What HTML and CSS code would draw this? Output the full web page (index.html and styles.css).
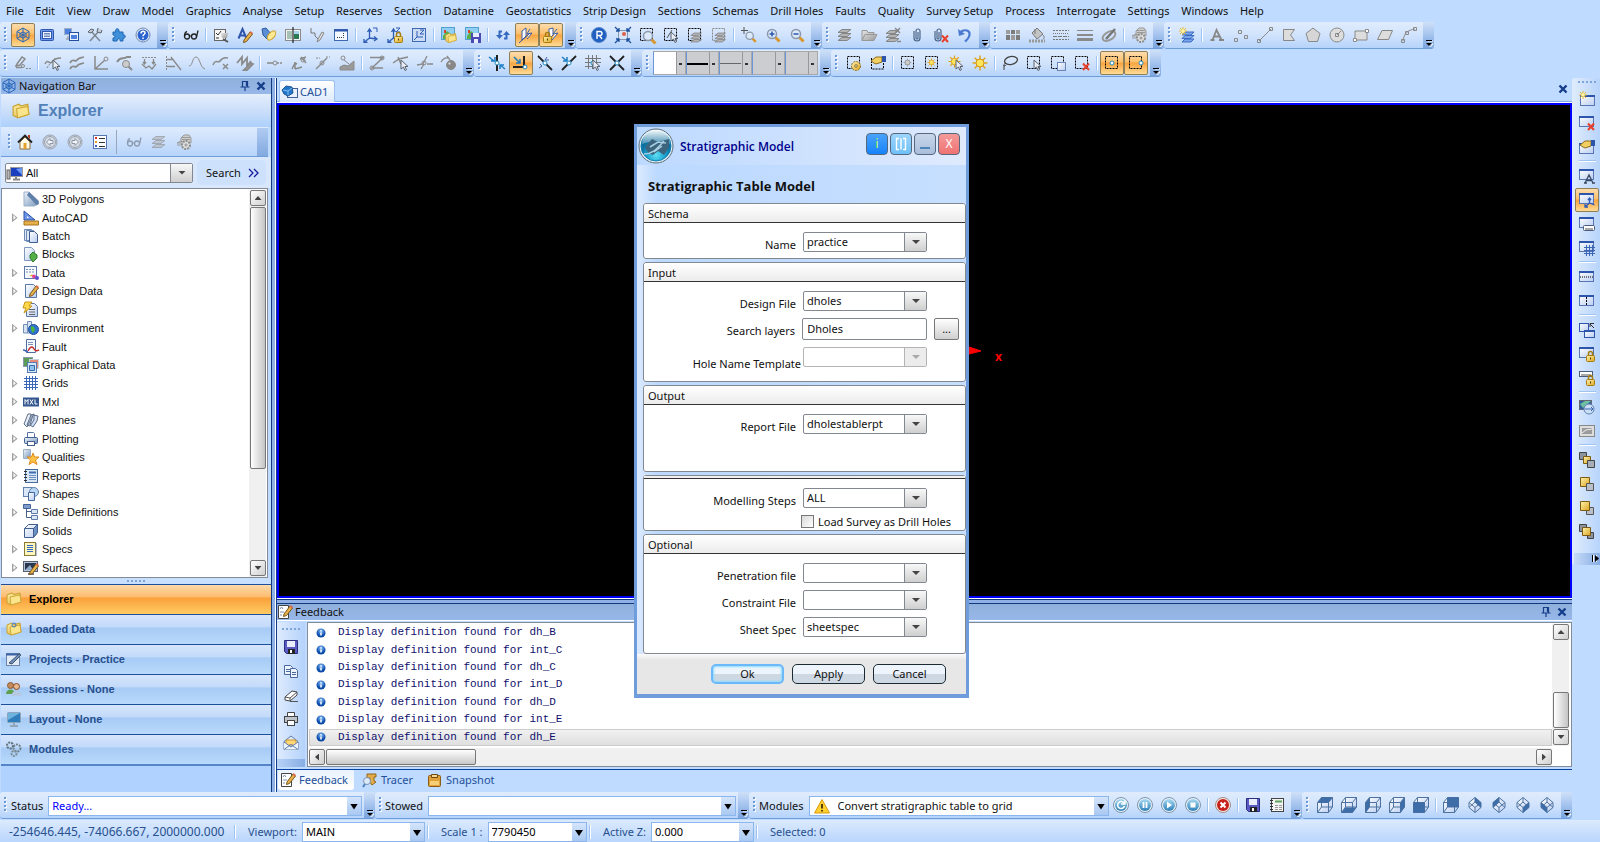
FILE: index.html
```html
<!DOCTYPE html>
<html lang="en">
<head>
<meta charset="utf-8">
<title>CAD1 - Stratigraphic Model</title>
<link rel="stylesheet" href="styles.css">
</head>
<body>
<svg class="defs" aria-hidden="true">
  <defs>
    <linearGradient id="gold" x2="1" y2="1"><stop stop-color="#fff3b0"/><stop offset="1" stop-color="#dba520"/></linearGradient>
    <linearGradient id="pane" x2="1" y2="1"><stop stop-color="#fff"/><stop offset="1" stop-color="#b9cdf2"/></linearGradient>
    <linearGradient id="steel" x2="1" y2="1"><stop stop-color="#eef5fb"/><stop offset="1" stop-color="#7795bb"/></linearGradient>
    <linearGradient id="ash" x2="1" y2="1"><stop stop-color="#e4e4e4"/><stop offset="1" stop-color="#9a9a9a"/></linearGradient>
    <linearGradient id="sky" x2="0" y2="1"><stop stop-color="#a9dbf3"/><stop offset="1" stop-color="#2d7fb8"/></linearGradient>
    <radialGradient id="ball" cy=".3"><stop stop-color="#8cc4ff"/><stop offset="1" stop-color="#0a4aa8"/></radialGradient>
    <radialGradient id="lagoon" cy=".8"><stop stop-color="#5fe0f5"/><stop offset=".6" stop-color="#1aa3cf"/><stop offset="1" stop-color="#0c6f9f"/></radialGradient>
    <linearGradient id="gloss" x2="0" y2="1"><stop stop-color="#fff" stop-opacity=".95"/><stop offset="1" stop-color="#fff" stop-opacity=".25"/></linearGradient>
  </defs>
  <symbol id="more" viewBox="0 0 11 26"><path d="M4 18h5M4 21h5l-2.500 3z" stroke="#fff" transform="translate(1 1)"/><path d="M3 18.500h6" stroke="#000"/><path d="M3 21h6l-3 3z" fill="#000"/></symbol>
  <symbol id="dash" viewBox="0 0 16 16"><rect x="1.500" y="1.500" width="12" height="12" stroke="#000" stroke-dasharray="2 1"/></symbol>
  <symbol id="lock" viewBox="0 0 16 16"><path d="M9.500 10V7.500a2 2 0 0 1 4 0V10" stroke="#a87d10" stroke-width="1.500"/><rect x="7.500" y="9.500" width="8" height="6" rx="1" fill="url(#gold)" stroke="#a87d10"/><path d="M11.500 11.500v2" stroke="#5a3c00"/></symbol>
  <symbol id="win" viewBox="0 0 16 16"><rect x=".5" y="1.500" width="14" height="10" fill="url(#pane)" stroke="#5676b4"/><path d="M0 2h15" stroke="#2c55ab" stroke-width="2"/></symbol>
  <symbol id="stack" viewBox="0 0 16 16"><g fill="#b5b5b5" stroke="#858585"><path d="M1 13.500h9l4-3H5zM1 9.500h9l4-3H5zM1 5.500h9l4-3H5z"/></g></symbol>
  <symbol id="mag" viewBox="0 0 16 16"><path d="M10.500 10.500l4 4" stroke="#d9962a" stroke-width="3"/><circle cx="7" cy="7" r="4.500" fill="#dbe9fb" stroke="#8b97a8" stroke-width="1.500"/></symbol>
  <symbol id="folder" viewBox="0 0 16 16"><path d="M1 4l5-2 2 1.500 6-1.500 1 9-10 3-4-2z" fill="url(#gold)" stroke="#c79f2a"/><path d="M4 6l10-2 1 7-10 3z" fill="#fbe58c" stroke="#d0a93a"/></symbol>
  <symbol id="save" viewBox="0 0 16 16"><path d="M1.500 1.500h13v13h-11l-2-2z" fill="#5a5ac4" stroke="#2c2c80"/><path d="M4 2h8v6H4z" fill="#e9edfb"/><path d="M5 10h7v5H5z" fill="#222"/><path d="M7 11h2v3H7z" fill="#fff"/></symbol>
  <symbol id="pencil" viewBox="0 0 16 16"><path d="M7 12l6-8 2.500 2-6 7.500-3 1z" fill="#e7b24b" stroke="#77551d"/><path d="M12.500 4.500l2.500 2 1-1.500-2.500-2z" fill="#d96a4c"/></symbol>
  <symbol id="arrow" viewBox="0 0 16 16"><path d="M8 5v9l2.500-2 1.500 3.500 1.500-.8-1.500-3.200h3z" fill="#e8edf5" stroke="#59626f"/></symbol>
  <symbol id="sun" viewBox="0 0 16 16"><path d="M8 .5v15M.5 8h15M2.700 2.700l10.600 10.600M13.300 2.700L2.700 13.300" stroke="#e0a41c" stroke-width="1.500"/><circle cx="8" cy="8" r="4" fill="#ffe55c" stroke="#d4931a"/></symbol>
  <symbol id="spark" viewBox="0 0 16 16"><path d="M4 0v8M0 4h8M1 1l6 6M7 1L1 7" stroke="#e9bb2d"/><circle cx="4" cy="4" r="1.800" fill="#fff4a0"/></symbol>
  <symbol id="cross" viewBox="0 0 16 16"><path d="M9 8.500l6 6.500M15 8.500L9 15" stroke="#e8402a" stroke-width="2"/></symbol>
  <symbol id="hand" viewBox="0 0 16 16"><path d="M1 6l5-4h6v5l-6 2-2-1z" fill="#f2cf63" stroke="#8c6a1b"/><path d="M12 1h4v6h-4z" fill="#2c55ab"/></symbol>
  <symbol id="doc" viewBox="0 0 16 16"><path d="M2.500 1.500h8l3 3v10h-11z" fill="url(#pane)" stroke="#5a79a8"/></symbol>
  <symbol id="globe" viewBox="0 0 16 16"><circle cx="8" cy="8" r="7" fill="#d7dde6" stroke="#97a0ad"/><circle cx="8" cy="8" r="5.500" fill="none" stroke="#97a0ad"/></symbol>
  <symbol id="palm" viewBox="0 0 16 16"><path d="M5 8V4l3-3h5l2 3v5M1 9l4-2 3 2" fill="#cfcfcf" stroke="#999"/><path d="M6 3.500h8M6 5.500h8M1 9h5M1 11h5" stroke="#999"/><circle cx="10" cy="11" r="4" fill="#ddd" stroke="#8d8d8d" stroke-width="2" stroke-dasharray="2 1"/><circle cx="10" cy="11" r="1" fill="#fff" stroke="#888"/></symbol>
  <symbol id="glasses" viewBox="0 0 16 16"><path d="M4 4.500C2 5 1.500 7 1.500 9.500M15 3.500L13.500 10" stroke="currentColor" stroke-width="1.300"/><circle cx="4" cy="9.500" r="2.500" stroke="currentColor" stroke-width="1.300"/><circle cx="11" cy="9.500" r="2.500" stroke="currentColor" stroke-width="1.300"/><path d="M6.500 9h2" stroke="currentColor"/></symbol>
  <symbol id="axes" viewBox="0 0 16 16"><path d="M6.500 11V3M6.500 11l7 1M6.500 11l-5 4M4.500 5l2-3 2 3M11 9.500l3 2.500-3 2M1 12v3.500h3.500" stroke="#2d5bb5" stroke-width="1.300"/></symbol>
  <symbol id="node" viewBox="0 0 16 16"><circle cx="8" cy="8" r="2" fill="#fff" stroke="#1d8cc4"/></symbol>
  <symbol id="pin" viewBox="0 0 12 12"><path d="M3.500 1v5.500M8.500 1v5.500M3 1.500h6M1.500 7h9M6 7v4M7.500 2v4" stroke="#153d8a" stroke-width="1.200"/></symbol>
  <symbol id="close" viewBox="0 0 12 12"><path d="M2.500 2.500l7 7M9.500 2.500l-7 7" stroke="#153d8a" stroke-width="2.400"/></symbol>
  <symbol id="wheel" viewBox="0 0 16 16"><path d="M8 1v14M2 4.500l12 7M14 4.500l-12 7M8 1L2 4.500v7L8 15l6-3.500v-7zM8 5L5 6.500v3L8 11l3-1.500v-3z" stroke="#2567bd"/></symbol>
  <symbol id="info" viewBox="0 0 10 10"><circle cx="5" cy="5" r="4.500" fill="url(#ball)"/><path d="M5 4.500v3M5 2.200v1.200" stroke="#fff" stroke-width="1.500"/></symbol>
  <symbol id="note" viewBox="0 0 16 16"><path d="M1.500 1.500h10v13h-10z" fill="#fff" stroke="#444"/><path d="M3 5l1.500-2L6 5M3 8h4M3 11h2" stroke="#7a8fb0"/><use href="#pencil" y="-2"/></symbol>
  <symbol id="iris" viewBox="0 0 16 16"><circle cx="8" cy="8" r="7.500" fill="#e9f1f9" stroke="#7d94ad"/><circle cx="8" cy="8" r="6" fill="url(#sky)"/></symbol>
  <symbol id="box" viewBox="0 0 16 16"><path d="M.5 5.500l4-5h11v9l-4 6H.5z" fill="url(#pane)"/><path d="M.5 5.500h11v10H.5zM.5 5.500l4-5h11l-4 5M15.500.5v9.500l-4 5.500M4.500.5V10M4.500 10h11M4.500 10l-4 5.500" stroke="#4d729f"/></symbol>
  <symbol id="gem" viewBox="0 0 16 16"><path d="M8 .5l6 5v5l-6 5-6-5v-5z" fill="url(#pane)"/><path d="M8 .5l6 5v5l-6 5-6-5v-5zM2 5.500l6 5 6-5M8 10.500v5M8 .5V5L2 10.500M8 5l6 5.500" stroke="#4d729f"/></symbol>
</svg>

<nav class="menubar" aria-label="Main menu">
  <button>File</button><button>Edit</button><button>View</button><button>Draw</button><button>Model</button><button>Graphics</button><button>Analyse</button><button>Setup</button><button>Reserves</button><button>Section</button><button>Datamine</button><button>Geostatistics</button><button>Strip Design</button><button>Sections</button><button>Schemas</button><button>Drill Holes</button><button>Faults</button><button>Quality</button><button>Survey Setup</button><button>Process</button><button>Interrogate</button><button>Settings</button><button>Windows</button><button>Help</button>
</nav>

<div class="toolrow">
  <div class="toolbar" role="toolbar" aria-label="Panels"><i class="grip"></i>
    <button class="tool on" aria-label="Navigation"><svg><use href="#wheel"/></svg></button>
    <button class="tool" aria-label="Feedback panel"><svg><rect x="1.500" y="2.500" width="13" height="11" rx="1" fill="#6d9af0" stroke="#2f56a8"/><rect x="3.500" y="4.500" width="9" height="7" fill="#f2f7ff" stroke="#2f56a8"/><path d="M5 6.500h6M5 8h6M5 9.500h6" stroke="#6c86bd"/></svg></button>
    <button class="tool" aria-label="Cascade windows"><svg><rect x="1.500" y="1.500" width="7" height="6" fill="#4b7fe0" stroke="#9db0cc"/><path d="M5 9v2.500M3 12h4" stroke="#888"/><rect x="6.500" y="5.500" width="9" height="8" fill="#eaf2ff" stroke="#244f9f"/><rect x="8" y="8" width="6" height="4" fill="#4b7fe0"/></svg></button>
    <button class="tool" aria-label="Tools"><svg><path d="M3 14L12 4M4 4l9 10" stroke="#7e8693" stroke-width="1.500"/><path d="M1 5l3-3 3 1-3 3zM11 1l-1 4 4 1 1-3" fill="#c4ccd6" stroke="#5d6672"/></svg></button>
    <button class="tool" aria-label="Add-ins"><svg><path d="M2 5h3c-2-3 3-5 3-1v1h4v3c3-1 3 4 0 3v3H9c1-3-3-3-3 0H2v-3c3 0 2-3 0-3z" fill="#3f8fdb" stroke="#1f67b4"/></svg></button>
    <button class="tool" aria-label="Help"><svg><circle cx="8" cy="8" r="7" fill="#e6eef9" stroke="#7188ac"/><circle cx="8" cy="8" r="5.500" fill="#2a62cf"/><path d="M6 6.500c0-3 4-3 4-.5 0 1.500-2 1.500-2 3.200M8 10.500v1.500" stroke="#fff" stroke-width="1.500"/></svg></button>
    <button class="more" aria-label="More"><svg><use href="#more"/></svg></button></div>
  <div class="toolbar" role="toolbar" aria-label="View"><i class="grip"></i>
    <button class="tool" aria-label="View mode"><svg class="dark"><use href="#glasses"/></svg></button><i class="sep"></i>
    <button class="tool" aria-label="Checklist"><svg><rect x="1.500" y="2.500" width="11" height="11" fill="#f5f5f5" stroke="#666"/><path d="M3 6l2 2 3-4M3 11h3" stroke="#333"/><path d="M8 6h7l-1 5H9z" fill="url(#ash)"/><path d="M10 12l5 3" stroke="#555" stroke-width="2"/></svg></button>
    <button class="tool" aria-label="Text style"><svg><path d="M1.500 11.500L5.500 2l4 9.500M3 8.500h5" stroke="#2c55ab" stroke-width="2"/><use href="#pencil" y="1"/></svg></button>
    <button class="tool" aria-label="Light"><svg><path d="M1 2l4-1 5 6-4 5-4-4z" fill="#5a8fd6" stroke="#2e5a9b"/><ellipse cx="10.500" cy="8.500" rx="5.500" ry="3" transform="rotate(-50 10.500 8.500)" fill="#ffe891" stroke="#caa02d"/></svg></button>
    <button class="tool" aria-label="Image"><svg><rect x=".5" y="2.500" width="15" height="11" fill="#f4f4f4" stroke="#8b8b8b"/><path d="M2 4h5v8H2z" fill="#a5c2b5"/><path d="M9 4h5v8H9z" fill="#2b7a56"/><path d="M9 4h5v3H9z" fill="#a7d3f0"/><path d="M8 0v16" stroke="#000"/></svg></button>
    <button class="tool" aria-label="Sketch"><svg><path d="M2 1v5h4M6 6v3l3 3" stroke="#777"/><path d="M9 12l4-7 2 1-4 7-3 2z" fill="#ddd" stroke="#888"/></svg></button>
    <button class="tool" aria-label="Fit window"><svg><rect x="1.500" y="2.500" width="13" height="11" fill="#f2f6fd" stroke="#3e68b2"/><path d="M1 3.500h14" stroke="#2c55ab" stroke-width="2"/><path d="M10.500 6v4.500H4" stroke="#333" stroke-dasharray="1 1"/></svg></button><i class="sep"></i>
    <button class="tool" aria-label="Rotate axes"><svg><use href="#axes"/><path d="M10 1h4v4" stroke="#2d5bb5"/></svg></button>
    <button class="tool" aria-label="Lock axes"><svg><use href="#axes"/><path d="M9 1h4l-4 4h4" stroke="#2d5bb5"/><use href="#lock"/></svg></button>
    <button class="tool" aria-label="Plane"><svg><rect x="1.500" y="1.500" width="13" height="13" fill="#cddcf5" stroke="#3e68b2"/><path d="M6 10V4M6 10h6M6 10l-3 3M9 3h4L9 7h4" stroke="#2d5bb5"/></svg></button><i class="sep"></i>
    <button class="tool" aria-label="Open picture"><svg><rect x=".5" y=".5" width="13" height="12" fill="#8fd0f2" stroke="#55a0d0"/><path d="M2 9l4-5 5 4v4H2z" fill="#5cae45"/><path d="M3 3h2v3H3z" fill="#d8452c"/><use href="#folder" x="4" y="5" width="12" height="12"/></svg></button>
    <button class="tool" aria-label="Save picture"><svg><rect x=".5" y=".5" width="13" height="12" fill="#8fd0f2" stroke="#55a0d0"/><path d="M2 9l4-5 5 4v4H2z" fill="#5cae45"/><path d="M3 3h2v3H3z" fill="#d8452c"/><path d="M6 6h10v10H6z" fill="#4a4ab4"/><path d="M8 6h6v4H8zM9 12h4v4H9z" fill="#e9edfb"/></svg></button><i class="sep"></i>
    <button class="tool" aria-label="Refresh"><svg><path d="M7 4.500H4.500V10M9 11.500h2.500V6" stroke="#3568c0" stroke-width="2"/><path d="M1 8h7l-3.500 4zM8 8h7l-3.500-4z" fill="#3568c0"/></svg></button>
    <button class="tool on" aria-label="Slice"><svg><path d="M3 4l4-3v8l-4 4zM11 2l-3 5 5-1-5 6" fill="#fff" stroke="#3a5fa5"/><path d="M0 16L11 6" stroke="#2d4f9e"/></svg></button>
    <button class="tool on" aria-label="Lock slice"><svg><path d="M6 2l4-1v7l-4 4zM14 2l-4 5 5-1-6 7" fill="#fff" stroke="#3a5fa5"/><use href="#lock" x="-7"/></svg></button>
    <button class="more" aria-label="More"><svg><use href="#more"/></svg></button></div>
  <div class="toolbar" role="toolbar" aria-label="Zoom"><i class="grip"></i>
    <button class="tool" aria-label="Reset view"><svg><circle cx="8" cy="8" r="7.500" fill="#1f5fc0" stroke="#5b88cb"/><path d="M6 12V4.500h3a2 2 0 0 1 0 4H6M8.500 8.500l2.500 3.500" stroke="#fff" stroke-width="1.400"/></svg></button>
    <button class="tool" aria-label="Zoom all"><svg><rect x="3.500" y="3.500" width="9" height="9" fill="#d9e6fa" stroke="#8296b5"/><circle cx="9" cy="7" r="2" fill="#dd6147"/><path d="M0 0l4 4M16 0l-4 4M0 16l4-4M16 16l-4-4M1 4h3V1M12 1v3h3M1 12h3v3M15 12h-3v3" stroke="#1d4f9f" stroke-width="1.300"/></svg></button>
    <button class="tool" aria-label="Zoom window"><svg><use href="#dash"/><use href="#mag" x="2" y="2"/></svg></button>
    <button class="tool" aria-label="Select line"><svg><use href="#dash"/><path d="M4 11l5-8" stroke="#555"/><use href="#arrow"/></svg></button>
    <button class="tool" aria-label="Select layer"><svg><use href="#dash"/><use href="#stack" x="3" y="4" width="13" height="13"/></svg></button>
    <button class="tool" aria-label="Unselect layer"><svg><rect x="1.500" y="1.500" width="12" height="12" stroke="#888" stroke-dasharray="2 1"/><use href="#stack" x="3" y="4" width="13" height="13"/></svg></button><i class="sep"></i>
    <button class="tool" aria-label="Pan"><svg><path d="M3 0v7M0 3.500h7" stroke="#555"/><use href="#mag" x="3" y="3" width="13" height="13"/></svg></button>
    <button class="tool" aria-label="Zoom in"><svg><use href="#mag"/><path d="M7 4.500v5M4.500 7h5" stroke="#2c55ab" stroke-width="1.500"/></svg></button>
    <button class="tool" aria-label="Zoom out"><svg><use href="#mag"/><path d="M4.500 7h5" stroke="#2c55ab" stroke-width="1.500"/></svg></button>
    <button class="more" aria-label="More"><svg><use href="#more"/></svg></button></div>
  <div class="toolbar" role="toolbar" aria-label="Layers"><i class="grip"></i>
    <button class="tool" aria-label="Layers"><svg><use href="#stack"/></svg></button>
    <button class="tool" aria-label="Open layer"><svg><path d="M1 13.500v-10h5l1 2h6v2M1 13.500l3-6h12l-3 6z" fill="url(#ash)" stroke="#999"/></svg></button>
    <button class="tool" aria-label="Remove layer"><svg><use href="#stack" y="1"/><path d="M10 1l5 5M15 1l-5 5M12 14.500h4" stroke="#888" stroke-width="1.500"/></svg></button>
    <button class="tool" aria-label="Attach"><svg><path d="M5 4v7a3 3 0 0 0 6 0V4a2 2 0 0 0-4 0v7a1 1 0 0 0 2 0V5" stroke="#4a6488" stroke-width="1.200"/></svg></button>
    <button class="tool" aria-label="Detach"><svg><path d="M2 4v7a3 3 0 0 0 6 0V4a2 2 0 0 0-4 0v7a1 1 0 0 0 2 0V5" stroke="#4a6488" stroke-width="1.200"/><use href="#cross"/></svg></button>
    <button class="tool" aria-label="Undo"><svg><path d="M4 4.500c6-3 10 0 8 5-1 3-3 4-4 5" stroke="#4a7ad0" stroke-width="2.200"/><path d="M1 2l1 7 6-2z" fill="#4a7ad0"/></svg></button>
    <button class="more" aria-label="More"><svg><use href="#more"/></svg></button></div>
  <div class="toolbar" role="toolbar" aria-label="Attributes"><i class="grip"></i>
    <button class="tool" aria-label="Colours"><svg><path d="M1 3h4v4H1zM6 8h4v5H6zM11 3h4v4h-4z" fill="#9c9c9c"/><path d="M6 3h4v4H6zM1 8h4v5H1zM11 8h4v5h-4z" fill="#7c7c7c"/></svg></button>
    <button class="tool" aria-label="Fill"><svg><path d="M3 6l5-5 6 6-6 5z" fill="#c4c4c4" stroke="#777"/><path d="M6 7V2M14 8c2 2 1 4 0 4" stroke="#777"/><path d="M0 14h16" stroke="#999" stroke-width="3" stroke-dasharray="2 1"/></svg></button>
    <button class="tool" aria-label="Line type"><svg><path d="M0 3.500h16M0 12.500h16" stroke="#777" stroke-dasharray="2 1"/><path d="M0 6.500h16" stroke="#777" stroke-dasharray="1 1"/><path d="M0 9.500h16" stroke="#777" stroke-dasharray="4 1"/></svg></button>
    <button class="tool" aria-label="Line weight"><svg><path d="M0 3.500h16" stroke="#8a8a8a"/><path d="M0 8h16" stroke="#8a8a8a" stroke-width="2"/><path d="M0 12.500h16" stroke="#8a8a8a" stroke-width="3"/></svg></button>
    <button class="tool" aria-label="Brush"><svg><ellipse cx="8" cy="9" rx="7" ry="4" transform="rotate(-30 8 9)" stroke="#999" stroke-width="2"/><path d="M5 12l9-10" stroke="#777" stroke-width="2.500"/></svg></button><i class="sep"></i>
    <button class="tool" aria-label="Shade"><svg><use href="#palm"/></svg></button>
    <button class="more" aria-label="More"><svg><use href="#more"/></svg></button></div>
  <div class="toolbar" role="toolbar" aria-label="Create"><i class="grip"></i>
    <button class="tool" aria-label="New layer"><svg><g fill="#79a3ea" stroke="#3d6cc4"><path d="M3 15h9l3-3H6zM3 11.500h9l3-3H6zM3 8h9l3-3H6z"/></g><use href="#spark"/></svg></button><i class="sep"></i>
    <button class="tool" aria-label="Create text"><svg><path d="M3.500 13L7.500 3l5 10M5 9.500h6M1.500 13h4M10 13h5" stroke="#878787" stroke-width="1.800"/></svg></button>
    <button class="tool" aria-label="Create points"><svg class="gray"><path d="M1.500 11.500h3v3h-3zM5.500 3.500h3v3h-3zM11.500 8.500h3v3h-3z"/></svg></button>
    <button class="tool" aria-label="Create line"><svg class="gray"><path d="M2 14L14 2M.5 12.500h3v3h-3zM12.500.5h3v3h-3z"/></svg></button>
    <button class="tool" aria-label="Create polygon"><svg><path d="M2.500 2.500h11l-4 5.500 4 5.500h-11z" fill="#ddd" stroke="#888"/></svg></button>
    <button class="tool" aria-label="Create pentagon"><svg><path d="M8 1l7 5.500-2.500 8h-9L1 6.500z" fill="#d6d6d6" stroke="#888"/></svg></button>
    <button class="tool" aria-label="Create circle"><svg class="gray"><circle cx="8" cy="8" r="7" fill="#ddd"/><path d="M8 8l4-4M6.500 6.500h3v3h-3z"/></svg></button>
    <button class="tool" aria-label="Create rectangle"><svg class="gray"><path d="M2 4h12v9H2z" fill="#ddd"/><path d="M.5 11.500h3v3h-3zM12.500 2.500h3v3h-3z" fill="#fff"/></svg></button>
    <button class="tool" aria-label="Create parallelogram"><svg><path d="M5 3.500h10.500l-4 9H.5z" fill="#ddd" stroke="#888"/></svg></button>
    <button class="tool" aria-label="Create arc"><svg class="gray"><path d="M2 14C3 6 7 3 14 2M.5 12.500h3v3h-3zM12.500.5h3v3h-3zM4.500 4.500h3v3h-3z"/></svg></button>
    <button class="more" aria-label="More"><svg><use href="#more"/></svg></button></div>
</div>

<div class="toolrow">
  <div class="toolbar" role="toolbar" aria-label="Modify"><i class="grip"></i>
    <button class="tool" aria-label="Edit point"><svg class="gray"><path d="M2 9l5-7 3 2-5 6-4 1zM1 12.500h6" stroke-width="1.500"/><circle cx="8" cy="11" r="1.500"/><path d="M11 13.500h5" stroke-dasharray="2 1"/></svg></button><i class="sep"></i>
    <button class="tool" aria-label="Move point"><svg class="gray"><path d="M0 9c3-6 4 1 7-2 2-3 4-4 9-4" stroke-width="1.500"/><path d="M2 13c3-6 5-4 8-10" stroke-dasharray="2 1"/><use href="#arrow"/></svg></button>
    <button class="tool" aria-label="Parallel line"><svg class="gray"><path d="M1 8c3-6 5 0 7-3s4-2 7-3M1 14c3-6 5 0 7-3s4-2 7-3" stroke-width="1.800"/></svg></button>
    <button class="tool" aria-label="Angle"><svg class="gray"><path d="M2 1v13h13M2 14L12 5" stroke-width="1.500"/><circle cx="13" cy="4" r="2"/></svg></button>
    <button class="tool" aria-label="Inspect line"><svg class="gray"><path d="M0 7c4-6 6-2 10-5h4M11 11l4 4" stroke-width="2"/><circle cx="9" cy="9" r="3.500" fill="#ccc"/></svg></button>
    <button class="tool" aria-label="Drape"><svg class="gray"><path d="M1 2.500h14" stroke-dasharray="2 1"/><path d="M3.500 4v5M12.500 4v5M1 9l4 4 3-2 3 3 4-5M2 7l1.500 2L5 7M11 7l1.500 2L14 7" stroke-width="1.300"/></svg></button>
    <button class="tool" aria-label="Project"><svg class="gray"><path d="M1.500 1v14" stroke-dasharray="2 1"/><path d="M2 4.500h6M2 11.500h8M6 2l10 13" stroke-width="1.300"/></svg></button>
    <button class="tool" aria-label="Smooth"><svg class="gray"><path d="M0 11c4 0 3-9 7-9s4 11 9 12"/></svg></button>
    <button class="tool" aria-label="Delete segment"><svg class="gray"><path d="M0 10c3-7 5-1 7-4s4-4 8-3M10 9l5 5M15 9l-5 5" stroke-width="1.500"/></svg></button>
    <button class="tool" aria-label="Edit lines"><svg class="gray"><path d="M0 8l5-6v7l5-6v8l4-5M7 15l7-7 2 1-6 6z" stroke-width="1.800"/></svg></button><i class="sep"></i>
    <button class="tool" aria-label="Insert point"><svg class="gray"><path d="M0 8h6" stroke-width="1.500"/><path d="M10 8h6" stroke-width="1.500" stroke-dasharray="2 1"/><circle cx="8" cy="8" r="2"/></svg></button>
    <button class="tool" aria-label="Move axes"><svg class="gray"><path d="M4 14V7M4 14l7-2M1 14l3-6 2 1M10 2l5 6M9 4l6-2" stroke-width="1.500"/><circle cx="12" cy="5" r="2"/></svg></button>
    <button class="tool" aria-label="Extend"><svg class="gray"><path d="M1 14l11-11" stroke-width="1.500"/><path d="M1 3h4M11 2h4" stroke-dasharray="2 1"/><circle cx="7" cy="8" r="2"/></svg></button>
    <button class="tool" aria-label="Profile"><svg class="gray"><circle cx="4" cy="3" r="2"/><path d="M5 5l5 4"/><path d="M1 15v-3l4-2 4 1 6-5v9z" fill="#999"/></svg></button><i class="sep"></i>
    <button class="tool" aria-label="Reverse"><svg class="gray"><path d="M1 2.500h13L3 13h11" stroke-width="1.500"/><circle cx="13" cy="3" r="2"/><circle cx="3" cy="13" r="2"/></svg></button>
    <button class="tool" aria-label="Pick point"><svg class="gray"><path d="M0 8l6-4 9-2M5 2l3 7" stroke-width="1.500"/><use href="#arrow"/></svg></button>
    <button class="tool" aria-label="Break"><svg class="gray"><path d="M0 10l6-1 4-8M10 9h6M7 9l-3 5" stroke-width="1.300"/><circle cx="7" cy="8" r="2"/></svg></button>
    <button class="tool" aria-label="Explode"><svg class="gray"><path d="M0 7c3-5 5-4 8-4M6 1l3 4" stroke-width="1.300"/><circle cx="10" cy="10" r="4.500" fill="#888"/><circle cx="8.500" cy="8.500" r="1.500" fill="#ddd"/></svg></button>
    <button class="more" aria-label="More"><svg><use href="#more"/></svg></button></div>
  <div class="toolbar" role="toolbar" aria-label="Snap"><i class="grip"></i>
    <button class="tool" aria-label="Snap to line"><svg><path d="M8 0v16" stroke="#222" stroke-width="2"/><path d="M0 2l5 4M2 6h4V2M16 14l-5-4M11 14v-4h4" stroke="#1d7ec4" stroke-width="1.500"/><use href="#node"/></svg></button>
    <button class="tool on" aria-label="Snap to point"><svg><path d="M0 12h11V1" stroke="#222" stroke-width="2"/><path d="M1 2l6 6M7 4v4H3" stroke="#1d7ec4" stroke-width="1.500"/><use href="#node" x="4" y="4"/></svg></button>
    <button class="tool" aria-label="Snap to segment"><svg><path d="M1 1l14 14" stroke="#222" stroke-width="1.800"/><path d="M10 2l-2 3h4M3 9l2 2-3 2" stroke="#3a5fa5"/><use href="#node"/></svg></button>
    <button class="tool" aria-label="Snap to surface"><svg><path d="M1 15L15 1" stroke="#222" stroke-width="1.800"/><path d="M1 2l5 4M6 2v4H2" stroke="#1d7ec4" stroke-width="1.500"/><use href="#node"/></svg></button>
    <button class="tool" aria-label="Snap to grid"><svg><path d="M0 3.500h16M0 7.500h16M0 11.500h10M3.500 0v14M7.500 0v14M11.500 0v9" stroke="#777"/><use href="#node"/><use href="#arrow"/></svg></button>
    <button class="tool" aria-label="Snap to intersection"><svg><path d="M1 1l14 14M15 1L1 15" stroke="#222" stroke-width="1.800"/><use href="#node"/></svg></button>
    <button class="more" aria-label="More"><svg><use href="#more"/></svg></button></div>
  <div class="toolbar" role="toolbar" aria-label="Styles"><i class="grip"></i>
    <button class="swatch white" aria-label="Colour"></button><button class="swatch thick" aria-label="Weight"></button><button class="swatch thin" aria-label="Style"></button><button class="swatch" aria-label="Pattern"></button><button class="swatch" aria-label="Symbol"></button>
    <button class="more" aria-label="More"><svg><use href="#more"/></svg></button></div>
  <div class="toolbar" role="toolbar" aria-label="Selection"><i class="grip"></i>
    <button class="tool" aria-label="Selection settings"><svg><use href="#dash"/><circle cx="10" cy="11" r="4.500" fill="url(#gold)" stroke="#8c6a1b" stroke-dasharray="2 1"/><circle cx="10" cy="11" r="1.300" fill="#fff" stroke="#8c6a1b"/></svg></button>
    <button class="tool" aria-label="Selection properties"><svg><path d="M1.500 3v11h12V8" stroke="#000" stroke-dasharray="2 1"/><use href="#hand"/></svg></button><i class="sep"></i>
    <button class="tool" aria-label="Unselect"><svg><use href="#dash"/><path d="M7.500 3.500v8M3.500 7.500h8M5 5l5 5M10 5l-5 5" stroke="#aaa"/><circle cx="7.500" cy="7.500" r="2.500" fill="#ccc" stroke="#999"/></svg></button>
    <button class="tool" aria-label="Select highlighted"><svg><use href="#dash"/><use href="#sun" x="3" y="3" width="9" height="9"/></svg></button>
    <button class="tool" aria-label="Highlight pick"><svg><use href="#sun" width="13" height="13"/><use href="#arrow"/></svg></button>
    <button class="tool" aria-label="Highlight"><svg><use href="#sun"/></svg></button><i class="sep"></i>
    <button class="tool" aria-label="Lasso"><svg><ellipse cx="9" cy="5.500" rx="6.500" ry="4" transform="rotate(-12 9 5.500)" stroke="#444" stroke-width="1.300"/><path d="M4 8c-4 2-2 4 0 2M2 10v5" stroke="#444"/></svg></button>
    <button class="tool" aria-label="Select box"><svg><use href="#dash"/><use href="#arrow"/></svg></button>
    <button class="tool" aria-label="Copy selection"><svg><use href="#dash"/><rect x="7.500" y="7.500" width="8" height="8" fill="url(#pane)" stroke="#6a86b8"/></svg></button>
    <button class="tool" aria-label="Delete selection"><svg><use href="#dash"/><use href="#cross"/></svg></button><i class="sep"></i>
    <button class="tool on" aria-label="Select centre"><svg><use href="#dash"/><use href="#node"/></svg></button>
    <button class="tool on" aria-label="Select edge"><svg><use href="#dash"/><use href="#node" x="5"/></svg></button>
    <button class="more" aria-label="More"><svg><use href="#more"/></svg></button></div>
</div>

<main class="work">
  <aside class="nav">
    <header class="caption"><svg><use href="#wheel"/></svg><span>Navigation Bar</span><button aria-label="Pin"><svg><use href="#pin"/></svg></button><button aria-label="Close"><svg><use href="#close"/></svg></button></header>
    <h2 class="navhead"><svg><use href="#folder" width="18" height="18"/></svg>Explorer</h2>
    <div class="navtools"><i class="grip"></i>
      <button class="navtool" aria-label="Home"><svg><path d="M3 8v7h10V8L8 3z" fill="#fffbe8" stroke="#8a6d3a"/><path d="M1 8.500L8 1.500l7 7" stroke="#222" stroke-width="1.800"/><path d="M11 1h2v4l-2-2z" fill="#b23b1d"/><path d="M6.500 9h3v6h-3z" fill="#e3a02a"/></svg></button>
      <button class="navtool" aria-label="Back"><svg><use href="#globe"/><path d="M11 6.500H8V4.500L4.500 8 8 11.500v-2h3z" fill="#f2f4f7" stroke="#8a94a3"/></svg></button>
      <button class="navtool" aria-label="Forward"><svg><use href="#globe"/><path d="M5 6.500h3V4.500L11.500 8 8 11.500v-2H5z" fill="#f2f4f7" stroke="#8a94a3"/></svg></button>
      <button class="navtool" aria-label="List"><svg><rect x="1.500" y="1.500" width="13" height="13" fill="#fff" stroke="#5574b0"/><path d="M3 3h2v2H3z" fill="#d33"/><path d="M3 7h2v2H3z" fill="#e8a020"/><path d="M3 11h2v2H3z" fill="#36c"/><path d="M7 4.500h6M7 8.500h6M7 12.500h6" stroke="#333"/></svg></button>
      <i class="rule"></i>
      <button class="navtool" aria-label="View"><svg class="pale"><use href="#glasses"/></svg></button>
      <button class="navtool" aria-label="Layers"><svg class="faint"><use href="#stack"/></svg></button>
      <button class="navtool" aria-label="Shade"><svg><use href="#palm"/></svg></button>
      <i class="navend"></i></div>
    <div class="finder">
      <label class="combo pick"><svg><rect x="0" y="5" width="3" height="9" fill="#b8b8b8" stroke="#666"/><rect x="3.500" y="2.500" width="12" height="9" fill="#1c3fc0" stroke="#999"/><path d="M9 4l6-1v7z" fill="#6a9af5"/><path d="M9 12v2M6 14.500h7" stroke="#888" stroke-width="2"/></svg><select aria-label="Filter"><option>All</option></select></label>
      <button class="search">Search <svg><path d="M1 2l4 4-4 4M6 2l4 4-4 4" stroke="#1a1a9c" stroke-width="1.300"/></svg></button>
    </div>
    <div class="treebox">
      <ul class="tree">
        <li><svg><path d="M1 1l5 0 9.500 9v3l-4 2H1z" fill="url(#steel)" stroke="#9bb0c9"/><path d="M6 1l9.500 9v3l-2 1L4 4z" fill="#5f7fa8"/></svg>3D Polygons</li>
        <li class="sub"><svg><path d="M1 1v9h11z" fill="#6c95ea" stroke="#2d4fa5"/><path d="M4 6v2h2z" fill="#fff"/><path d="M1 11h14.500v4H1z" fill="#e5b04a" stroke="#a87321"/></svg>AutoCAD</li>
        <li><svg><path d="M1.500 1.500h7v11h-7zM3.500 2.500h7v11h-7z" fill="#dfe9f6" stroke="#6d8bb5"/><path d="M6.500 3.500h5l3 3v8h-8z" fill="url(#pane)" stroke="#3d5d8c"/></svg>Batch</li>
        <li><svg><path d="M1.500 1.500h7l3 3v10h-10z" fill="url(#pane)" stroke="#7e98bd"/><path d="M7 9l3-3 4 3v3l-4 4-3-4z" fill="#56b04a" stroke="#2f7d2a"/></svg>Blocks</li>
        <li class="sub"><svg><rect x="1.500" y="1.500" width="12" height="12" fill="#f5f9ff" stroke="#5a79a8"/><path d="M3 4.500h9M3 7h9" stroke="#7b93b8" stroke-dasharray="2 1"/><path d="M6 11l3-1.500 2 2z" fill="#e7a81e"/><circle cx="11" cy="11.500" r="2" fill="#e0439a"/><circle cx="14" cy="13" r="2" fill="#5a4fd0"/></svg>Data</li>
        <li class="sub"><svg><use href="#doc"/><use href="#pencil" y="-1"/></svg>Design Data</li>
        <li><svg><use href="#doc" x="1"/><path d="M6 7.500h6M6 10h6M6 12.500h6" stroke="#666"/><path d="M2 0h7L6 4h3L1 11l2-5H0z" fill="#ffd94a" stroke="#c9961c"/></svg>Dumps</li>
        <li class="sub"><svg><path d="M.5 13V4.500h4V13zM4.500 13V1.500h4V13z" fill="#d5e2f2" stroke="#7590b8"/><circle cx="10.500" cy="9.500" r="5" fill="#2f74d0" stroke="#1e4f9a"/><path d="M8 6l3 1 1 3-2 3-2-3z" fill="#4db53b"/></svg>Environment</li>
        <li><svg><path d="M3.500.5h9v13h-9z" fill="#f5f8fd" stroke="#4e6d9e"/><path d="M5 3.500h5M5 5.500h5" stroke="#7b93b8"/><path d="M0 11c3 0 3 2 5 2" stroke="#3a62c0" stroke-width="1.500"/><path d="M5 12c3-6 5-4 6-2s3 2 5 1" stroke="#c9302c" stroke-width="1.500"/></svg>Fault</li>
        <li><svg><rect x=".5" y=".5" width="9" height="9" fill="#5b9a57" stroke="#89a"/><rect x="6.500" y="2.500" width="9" height="9" fill="#e78a7a" stroke="#c9d3e0"/><rect x="4.500" y="5.500" width="9" height="10" fill="#d5e7fb" stroke="#557cb5"/><path d="M6.500 8.500h5v5h-5z" fill="#8fc2ee" stroke="#3a6aa5"/></svg>Graphical Data</li>
        <li class="sub"><svg><path d="M1 3.500h14M1 6.500h14M1 9.500h14M1 12.500h14M3.500 1v14M6.500 1v14M9.500 1v14M12.500 1v14" stroke="#3a66b5"/></svg>Grids</li>
        <li class="sub"><svg><rect y="3.500" width="16" height="9" fill="#35578f"/><path d="M2 10.500V5.500l1.500 2L5 5.500v5M7 5.500l3 5M10 5.500l-3 5M12 5.500v4.500h2.500" stroke="#fff"/></svg>Mxl</li>
        <li class="sub"><svg><path d="M1 12l4-10h3v5l-4 8zM4 13l4-10 3-1v6l-4 6zM7 13l3-10 5 1-1 5-4 6z" fill="url(#pane)" stroke="#5d6f88"/></svg>Planes</li>
        <li class="sub"><svg><path d="M4.500 6V1.500h6l1 1V6" fill="#fff" stroke="#5674a5"/><rect x="1.500" y="6.500" width="13" height="6" rx="1" fill="url(#steel)" stroke="#41608f"/><rect x="4.500" y="10.500" width="7" height="4" fill="#fff" stroke="#41608f"/></svg>Plotting</li>
        <li class="sub"><svg><path d="M.5.500h7v9h-7z" fill="url(#steel)" stroke="#9db0c9"/><path d="M10 4l1.500 4H16l-3.500 3 1.500 4.500-4-2.500-4 2.500L7.500 11 4 8h4.500z" fill="#ffc447" stroke="#e08a1c"/></svg>Qualities</li>
        <li class="sub"><svg><rect x="2.500" y="1.500" width="12" height="13" fill="#d9e7f7" stroke="#456a9c"/><path d="M1 3.500h3M1 6.500h3M1 9.500h3M1 12.500h3" stroke="#333"/><path d="M6 4.500h7" stroke="#3f6fb0" stroke-width="2"/><path d="M6 7.500h7M6 9.500h7M6 11.500h7" stroke="#6e92bf"/></svg>Reports</li>
        <li><svg><rect x=".5" y="1.500" width="9" height="9" fill="#d9e7f7" stroke="#6283ad"/><circle cx="11" cy="6" r="4.500" fill="#b9d5f2" stroke="#6283ad"/><path d="M5.500 6.500h6v8h-6z" fill="url(#pane)" stroke="#3f67a0"/></svg>Shapes</li>
        <li class="sub"><svg><path d="M3.500 4v9.500H9M3.500 7.500H9" stroke="#49618a"/><path d="M.5.500h7v4h-7z" fill="#7d9acb" stroke="#43629a"/><path d="M8.500 5.500h6v4h-6zM8.500 11.500h6v4h-6z" fill="#dbe7f6" stroke="#5d7ba8"/></svg>Side Definitions</li>
        <li><svg><path d="M1.500 5.500l4-4h9v8l-4 5h-9z" fill="url(#pane)" stroke="#41608f"/><path d="M1.500 5.500h9v9" stroke="#41608f"/><path d="M10.500 5.500l4-4v8l-4 5z" fill="#6d90c4" stroke="#41608f"/></svg>Solids</li>
        <li class="sub"><svg><rect x="1.500" y="1.500" width="11" height="13" fill="#fff6bd" stroke="#8a7a35"/><path d="M4 4.500h6M4 6.500h6M4 8.500h6M4 10.500h6" stroke="#3766c4"/><path d="M13 2v13" stroke="#6b7fa0"/></svg>Specs</li>
        <li class="sub"><svg><rect x=".5" y="1.500" width="14" height="10" fill="#b3c3da" stroke="#555f70"/><path d="M2 3h11v7H2z" fill="#29384f"/><path d="M2 10l5-5 3 5z" fill="#8fa9ca"/><path d="M5 14h6" stroke="#777" stroke-width="2"/><use href="#pencil"/></svg>Surfaces</li>
      </ul>
      <div class="vscroll"><button class="arrow up" aria-label="Scroll up"></button><i class="thumb"></i><button class="arrow down end" aria-label="Scroll down"></button></div>
    </div>
    <div class="splitter"><i class="dots"></i></div>
    <div class="outlook">
      <button class="current"><svg><use href="#folder"/></svg>Explorer</button>
      <button><svg><use href="#folder"/><circle cx="8" cy="4" r="2" stroke="#3c79c9"/></svg>Loaded Data</button>
      <button><svg><rect x=".5" y="2.500" width="13" height="12" fill="#e2eaf5" stroke="#6d85aa"/><path d="M0 3.500h14" stroke="#3c62a8" stroke-width="2"/><path d="M3 12l10-9 2 1-9 9z" fill="#6e8fc0" stroke="#456"/></svg>Projects - Practice</button>
      <button><svg><circle cx="4.500" cy="4.500" r="3" fill="#c58a5a" stroke="#8a5a30"/><path d="M0 13c0-6 9-6 9 0z" fill="#5fa04c"/><circle cx="10.500" cy="5.500" r="3" fill="#e7b98e" stroke="#8a4a24"/><path d="M5.500 15c0-7 10-7 10 0z" fill="#b7c9e2"/></svg>Sessions - None</button>
      <button><svg><rect x="1.500" y="1.500" width="13" height="10" rx="1" fill="#2f7dbb" stroke="#8aa5bd"/><path d="M2 2h12L2 9z" fill="#6db3de"/><path d="M8 12v2M4 15h8" stroke="#8a97a5" stroke-width="1.500"/></svg>Layout - None</button>
      <button><svg><circle cx="4" cy="4.500" r="3" stroke="#5d6f7a" stroke-width="2" stroke-dasharray="2 1"/><circle cx="11" cy="7" r="3.500" stroke="#6f7f88" stroke-width="2" stroke-dasharray="2 1"/><circle cx="8" cy="12.500" r="2.500" stroke="#7f8f96" stroke-width="2" stroke-dasharray="2 1"/></svg>Modules</button>
    </div>
    <div class="navfoot"></div>
  </aside>
  <div class="vsplit"></div>
  <section class="centre">
    <div class="doctabs"><button class="doctab"><svg><rect x="5.500" y="4.500" width="10" height="9" fill="#e9f1fc" stroke="#3f5f98"/><path d="M0 6l4-4 6 1 1 6-5 3-4-2z" fill="#2476c9" stroke="#1c5596"/><path d="M1 6l5 1 4-3M6 7v4" stroke="#7cc0f5"/></svg>CAD1</button><button class="docclose" aria-label="Close"><svg><use href="#close"/></svg></button></div>
    <div class="viewport">
      <svg class="axis"><path d="M0 6h2V2l12 4-12 3V6z" fill="#f00" stroke="#f00"/></svg><span class="axislabel">x</span>
    </div>
    <div class="hsplit"></div>
    <section class="feedback">
      <header class="caption"><svg><use href="#note"/></svg><span>Feedback</span><button aria-label="Pin"><svg><use href="#pin"/></svg></button><button aria-label="Close"><svg><use href="#close"/></svg></button></header>
      <div class="fbody">
        <div class="ftools" role="toolbar" aria-label="Feedback"><i class="dots"></i>
          <button aria-label="Save"><svg><use href="#save"/></svg></button>
          <button aria-label="Copy"><svg><path d="M1.500 2.500h6l2 2v7h-8z" fill="#eef4fd" stroke="#49699f"/><path d="M3 6.500h4M3 8.500h4" stroke="#49699f"/><path d="M7.500 5.500h5l2 2v7h-7z" fill="#eef4fd" stroke="#49699f"/><path d="M9 9.500h4M9 11.500h4" stroke="#49699f"/></svg></button>
          <button aria-label="Clear"><svg><path d="M2 10l7-6 5 1v3l-7 6-5-1z" fill="#fff" stroke="#444"/><path d="M2 10l5 1 7-6M7 11v3M7 14.500h8" stroke="#555"/></svg></button>
          <button aria-label="Print"><svg><path d="M4.500 6V1.500h7V6" fill="#fff" stroke="#444"/><rect x="1.500" y="5.500" width="13" height="6" fill="#bfc4cc" stroke="#444"/><rect x="4.500" y="9.500" width="7" height="5" fill="#fff" stroke="#444"/></svg></button>
          <button aria-label="Mail"><svg><path d="M1 6.500L8 1l7 5.500v8H1z" fill="#dfe9f8" stroke="#5f7ba8"/><path d="M3 5h10v5H3z" fill="#ffd777" stroke="#c9962b"/><path d="M1 14.500V7l7 4 7-4v7.500z" fill="#eef4fd"/><path d="M1 14.500l7-5 7 5M1 7l7 5 7-5" stroke="#5f7ba8"/></svg></button>
          <i class="ftend"></i></div>
        <div class="log">
          <div class="logrow">
            <ul class="lines">
              <li><svg><use href="#info"/></svg>Display definition found for dh_B</li>
              <li><svg><use href="#info"/></svg>Display definition found for int_C</li>
              <li><svg><use href="#info"/></svg>Display definition found for dh_C</li>
              <li><svg><use href="#info"/></svg>Display definition found for int_D</li>
              <li><svg><use href="#info"/></svg>Display definition found for dh_D</li>
              <li><svg><use href="#info"/></svg>Display definition found for int_E</li>
              <li class="picked"><svg><use href="#info"/></svg>Display definition found for dh_E</li>
            </ul>
            <div class="vscroll"><button class="arrow up" aria-label="Scroll up"></button><i class="thumb small"></i><button class="arrow down" aria-label="Scroll down"></button></div>
          </div>
          <div class="hscroll"><button class="arrow left" aria-label="Scroll left"></button><i class="hthumb"></i><button class="arrow right" aria-label="Scroll right"></button></div>
        </div>
      </div>
      <div class="paneltabs">
        <button class="active"><svg><use href="#note"/></svg>Feedback</button>
        <button><svg><path d="M5 2h9v3h-2v4l2 1-4 3-2-3V6H5z" fill="#e3ad4b" stroke="#936419"/><circle cx="5" cy="9" r="3.500" fill="#dcebfb" stroke="#7f93ad"/><path d="M3 12l-2 3" stroke="#4a7fc0" stroke-width="2"/></svg>Tracer</button>
        <button><svg><rect x="1.500" y="3.500" width="12" height="11" rx="1" fill="#e0a03a" stroke="#8d5c14"/><path d="M4.500 5.500v-3h6v3z" fill="#f3d78c" stroke="#6f4b12"/><path d="M3 9h9v4H3z" fill="#f7cf78"/></svg>Snapshot</button>
      </div>
    </section>
  </section>
  <div class="side">
    <div class="sidebar" role="toolbar" aria-label="Windows"><i class="dots"></i>
      <button class="tool" aria-label="New window"><svg><use href="#win" x="1" y="3"/><use href="#spark"/></svg></button>
      <button class="tool" aria-label="Close window"><svg><use href="#win"/><use href="#cross"/></svg></button>
      <button class="tool" aria-label="Window properties"><svg><use href="#win" y="3"/><use href="#hand"/></svg></button><i class="bar"></i>
      <button class="tool" aria-label="Annotate"><svg><use href="#win"/><path d="M6 15l4-8 4 8M7 12.500h6M5 15h3M13 15h3" stroke="#3a4a62" stroke-width="1.300"/></svg></button>
      <button class="tool on" aria-label="Window axes"><svg><use href="#win"/><path d="M10.500 11V7M10.500 11l5 2M10.500 11L6 15M9 8l1.500-2L12 8M6 12v3h3" stroke="#2d5bb5" stroke-width="1.300"/></svg></button>
      <button class="tool" aria-label="Rulers"><svg><use href="#win"/><rect x="4.500" y="9.500" width="11" height="5" rx="1" fill="#fff" stroke="#4a5c7a"/><path d="M7 12v2M9 12v2M11 12v2M13 12v2" stroke="#555"/></svg></button>
      <button class="tool" aria-label="Window grid"><svg><use href="#win"/><path d="M5 7.500h11M5 10.500h11M5 13.500h11M7.500 5v11M10.500 5v11M13.500 5v11" stroke="#3a66b5"/></svg></button><i class="bar"></i>
      <button class="tool" aria-label="Split horizontally"><svg><use href="#win" y="1"/><path d="M1 8h13" stroke="#000" stroke-dasharray="1 1"/></svg></button>
      <button class="tool" aria-label="Split vertically"><svg><use href="#win" y="1"/><path d="M7.500 4v9" stroke="#000" stroke-dasharray="2 1"/></svg></button><i class="bar"></i>
      <button class="tool" aria-label="Link windows"><svg><rect x=".5" y="1.500" width="9" height="8" fill="url(#pane)" stroke="#2c55ab"/><rect x="5.500" y="8.500" width="10" height="7" fill="url(#pane)" stroke="#2c55ab"/><path d="M5 9h11" stroke="#2c55ab" stroke-width="2"/><path d="M11 2l4 4M11 5V1.500h4" stroke="#333"/></svg></button>
      <button class="tool" aria-label="Lock window"><svg><use href="#win"/><use href="#lock"/></svg></button>
      <button class="tool" aria-label="Lock scale"><svg><rect x=".5" y="1.500" width="13" height="5" fill="#fff" stroke="#4a5c7a"/><path d="M3 4v2M5 4v2M7 4v2M9 4v2M11 4v2" stroke="#555"/><use href="#lock"/></svg></button><i class="bar"></i>
      <button class="tool" aria-label="Capture"><svg><rect x=".5" y="1.500" width="12" height="9" fill="#2d5f9a" stroke="#667"/><path d="M1 5l5-3h6L4 9z" fill="#6fc0a0"/><circle cx="10" cy="10" r="5" fill="#cbe0f7" stroke="#5d7fad"/><path d="M6 10h8M12 8l2 2-2 2" stroke="#3a66b5"/></svg></button>
      <button class="tool" aria-label="Render"><svg><rect x=".5" y="2.500" width="15" height="11" fill="#ddd" stroke="#888"/><path d="M3 5h10v6H3z" fill="#9b9b9b"/><path d="M3 10l4-3 6-1" stroke="#eee"/></svg></button><i class="bar"></i>
      <button class="tool" aria-label="Order back"><svg><path d="M.5.500h7v7h-7z" fill="#8b939f" stroke="#444"/><path d="M4.500 4.500h7v7h-7z" fill="url(#gold)" stroke="#7c5c14"/><path d="M8.500 8.500h7v7h-7z" fill="#a5adb8" stroke="#444"/></svg></button>
      <button class="tool" aria-label="Send back"><svg><path d="M1.500 1.500h9v9h-9z" fill="url(#gold)" stroke="#7c5c14"/><path d="M7.500 7.500h7v7h-7z" fill="#b9c0ca" stroke="#555"/></svg></button>
      <button class="tool" aria-label="Bring forward"><svg><path d="M7.500 7.500h7v7h-7z" fill="#b9c0ca" stroke="#555"/><path d="M1.500 1.500h9v9h-9z" fill="url(#gold)" stroke="#7c5c14"/></svg></button>
      <button class="tool" aria-label="Bring to front"><svg><path d="M.5.500h7v7h-7zM8.500 8.500h6v6h-6z" fill="#8b939f" stroke="#444"/><path d="M3.500 3.500h8v8h-8z" fill="url(#gold)" stroke="#7c5c14"/></svg></button>
      <button class="sidemore" aria-label="More"><svg><path d="M4.500 2v7M7.500 2v7" stroke="#fff"/><path d="M3.500 2v7" stroke="#000"/><path d="M6 2v7l4-3.500z" fill="#000"/></svg></button>
    </div>
  </div>
</main>

<footer class="status">
  <div class="toolbar" role="toolbar" aria-label="Status"><i class="grip"></i><label class="field w-status">Status <span class="combo flat"><select class="ready"><option>Ready...</option></select></span></label><button class="more" aria-label="More"><svg><use href="#more"/></svg></button></div>
  <div class="toolbar" role="toolbar" aria-label="Stowed"><i class="grip slim"></i><label class="field w-stowed">Stowed <span class="combo flat"><select><option></option></select></span></label><button class="more" aria-label="More"><svg><use href="#more"/></svg></button></div>
  <div class="toolbar" role="toolbar" aria-label="Modules"><i class="grip slim"></i><label class="field w-modules">Modules <span class="combo flat warn"><svg><path d="M8 1.500L15.500 15H.5z" fill="#ffd02e" stroke="#d79a10" stroke-linejoin="round"/><path d="M8 6v4.500M8 12v1.500" stroke="#443000" stroke-width="1.800"/></svg><select><option>Convert stratigraphic table to grid</option></select></span></label>
    <button class="tool" aria-label="Restart"><svg><use href="#iris"/><path d="M11 6a3.500 3.500 0 1 0 .5 3M8 7h4V3" stroke="#fff" stroke-width="1.500"/></svg></button>
    <button class="tool" aria-label="Pause"><svg><use href="#iris"/><path d="M6.500 5v6M9.500 5v6" stroke="#fff" stroke-width="1.800"/></svg></button>
    <button class="tool" aria-label="Play"><svg><use href="#iris"/><path d="M6 4.500v7l5-3.500z" fill="#fff"/></svg></button>
    <button class="tool" aria-label="Stop"><svg><use href="#iris"/><path d="M5.500 5.500h5v5h-5z" fill="#fff"/></svg></button><i class="sep"></i>
    <button class="tool" aria-label="Cancel"><svg><circle cx="8" cy="8" r="7.500" fill="#f3e9e5" stroke="#a58d86"/><circle cx="8" cy="8" r="6" fill="#c8201c"/><path d="M5.500 5.500l5 5M10.500 5.500l-5 5" stroke="#fff" stroke-width="2"/></svg></button><i class="sep"></i>
    <button class="tool" aria-label="Save"><svg><use href="#save"/></svg></button>
    <button class="tool" aria-label="Report"><svg><rect x="2.500" y="1.500" width="12" height="13" fill="#f4f4f4" stroke="#444"/><path d="M1 3.500h3M1 6.500h3M1 9.500h3M1 12.500h3" stroke="#333"/><path d="M6 4.500h7" stroke="#5aa55a" stroke-width="2"/><path d="M6 8.500h3M10 8.500h3M6 10.500h3M10 10.500h3M6 12.500h3M10 12.500h3" stroke="#999"/></svg></button>
    <button class="more" aria-label="More"><svg><use href="#more"/></svg></button></div>
  <div class="toolbar" role="toolbar" aria-label="Orientation"><i class="grip"></i>
    <button class="tool" aria-label="Top"><svg><use href="#box"/><path d="M.5 5.500l4-5h11l-4 5z" fill="#3f6da8"/></svg></button>
    <button class="tool" aria-label="Bottom"><svg><use href="#box"/><path d="M.5 15.500l4-5h11l-4 5z" fill="#3f6da8"/></svg></button>
    <button class="tool" aria-label="Left"><svg><use href="#box"/><path d="M.5 15.500v-10l4-5V10z" fill="#3f6da8"/></svg></button>
    <button class="tool" aria-label="Right"><svg><use href="#box"/><path d="M11.500 15.500v-10l4-5V10z" fill="#3f6da8"/></svg></button>
    <button class="tool" aria-label="Front"><svg><use href="#box"/><path d="M.5 5.500h11v10H.5z" fill="#3f6da8"/></svg></button><i class="sep"></i>
    <button class="tool" aria-label="Back"><svg><use href="#box"/><path d="M4.500.500h11V10h-11z" fill="#3f6da8"/></svg></button>
    <button class="tool" aria-label="North east"><svg><use href="#gem"/><path d="M8 .5l6 5v5L8 5z" fill="#3f6da8"/></svg></button>
    <button class="tool" aria-label="North west"><svg><use href="#gem"/><path d="M8 .5l-6 5v5L8 5z" fill="#3f6da8"/></svg></button>
    <button class="tool" aria-label="South east"><svg><use href="#gem"/><path d="M8 15.500l6-5v-5l-6 5z" fill="#3f6da8"/></svg></button>
    <button class="tool" aria-label="South west"><svg><use href="#gem"/><path d="M8 15.500l-6-5v-5l6 5z" fill="#3f6da8"/></svg></button>
    <button class="more" aria-label="More"><svg><use href="#more"/></svg></button></div>
</footer>
<footer class="coords">
  <span class="xyz">-254646.445, -74066.667, 2000000.000</span><i class="sep"></i>
  <label class="field c1">Viewport: <span class="combo flat"><select><option>MAIN</option></select></span></label><i class="sep"></i>
  <label class="field c2">Scale 1 : <span class="combo flat"><select><option>7790450</option></select></span></label><i class="sep"></i>
  <label class="field c3">Active Z: <span class="combo flat"><select><option>0.000</option></select></span></label><i class="sep"></i>
  <span class="sel">Selected: 0</span>
</footer>

<div class="dialog" role="dialog" aria-labelledby="dlg-title">
  <header class="dtitle">
    <svg class="logo" viewBox="0 0 36 36"><circle cx="18" cy="18" r="17" fill="#e6f2f8" stroke="#5a6c78"/><circle cx="18" cy="18" r="15" fill="url(#lagoon)" stroke="#0e7fb0"/><path d="M4 16a14 14 0 0 1 28 0c-8-4-18-3-28 0z" fill="url(#gloss)"/><path d="M7 19l7-8 6 3 11-3 0 8-5 8-6-4-5 4-5-2z" fill="#3d647d"/><path d="M6 26c10 0 14-7 20-13M12 19l8-5 8 1M16 24l8-6" stroke="#a9cfe2" stroke-width="1.500"/></svg>
    <h1 id="dlg-title">Stratigraphic Model</h1>
    <button class="wbtn info" aria-label="Info">i</button><button class="wbtn dock" aria-label="Dock"><svg><path d="M5 2.500H2.500v11H5M9 2.500h2.500v11H9M7 2.500v11" stroke="#fff" stroke-width="1.400"/></svg></button><button class="wbtn mini" aria-label="Minimise"><svg><path d="M2 12h10" stroke="#4f86b8" stroke-width="2"/></svg></button><button class="wbtn shut" aria-label="Close">X</button>
  </header>
  <form class="dbody">
    <h2>Stratigraphic Table Model</h2>
    <fieldset><legend>Schema</legend><div class="rows schema">
      <div class="row"><label for="f-name">Name</label><span class="combo"><select id="f-name"><option>practice</option></select></span></div></div></fieldset>
    <fieldset><legend>Input</legend><div class="rows input">
      <div class="row"><label for="f-design">Design File</label><span class="combo"><select id="f-design"><option>dholes</option></select></span></div>
      <div class="row"><label for="f-layers">Search layers</label><input id="f-layers" type="text" value="Dholes"><button type="button" class="dots3" aria-label="Browse layers">...</button></div>
      <div class="row wide"><label for="f-hole">Hole Name Template</label><span class="combo off"><select id="f-hole" disabled><option></option></select></span></div></div></fieldset>
    <fieldset><legend>Output</legend><div class="rows output">
      <div class="row"><label for="f-report">Report File</label><span class="combo"><select id="f-report"><option>dholestablerpt</option></select></span></div></div></fieldset>
    <fieldset><div class="bare"></div><div class="rows steps">
      <div class="row"><label for="f-steps">Modelling Steps</label><span class="combo"><select id="f-steps"><option>ALL</option></select></span></div>
      <div class="check"><input type="checkbox" id="f-load"><label for="f-load">Load Survey as Drill Holes</label></div></div></fieldset>
    <fieldset><legend>Optional</legend><div class="rows optional">
      <div class="row"><label for="f-pen">Penetration file</label><span class="combo"><select id="f-pen"><option></option></select></span></div>
      <div class="row"><label for="f-con">Constraint File</label><span class="combo"><select id="f-con"><option></option></select></span></div>
      <div class="row"><label for="f-sheet">Sheet Spec</label><span class="combo"><select id="f-sheet"><option>sheetspec</option></select></span></div></div></fieldset>
  </form>
  <div class="dfoot"><button class="act primary">Ok</button><button class="act">Apply</button><button class="act">Cancel</button></div>
</div>
</body>
</html>
```
FILE: styles.css
```css
:root {
  --face: #bfdbff;
  --line: #6f9dd9;
  --ui: "Noto Sans", "Open Sans", sans-serif;
}
* { box-sizing: border-box; }
body {
  margin: 0;
  height: 100vh;
  display: flex;
  flex-direction: column;
  overflow: hidden;
  background: var(--face);
  color: #111;
  font: 11px/16px var(--ui);
}
button, select, input { font: inherit; color: inherit; }
button { border: 0; padding: 0; background: none; }
svg { width: 16px; height: 16px; fill: none; flex: none; overflow: visible; display: block; }
.defs { position: absolute; width: 0; height: 0; }
ul { list-style: none; margin: 0; padding: 0; }
h1, h2 { margin: 0; }
.dark { color: #222; }
.pale { color: #8d9bb0; }
.faint { opacity: .6; }
.gray { stroke: #8a8a8a; }

/* Menu */
.menubar { flex: none; width: 79%; height: 22px; display: flex; align-items: center; justify-content: space-between; padding-left: 6px; }
.menubar button { white-space: nowrap; }

/* Toolbars */
.toolrow { display: flex; flex: none; height: 27px; margin-bottom: 1px; }
.toolbar {
  display: flex;
  flex: none;
  height: 27px;
  align-items: center;
  border-bottom: 1px solid var(--line);
  border-radius: 3px;
  background: linear-gradient(#e0ecfd, #cfe2fc 55%, #b5d3fb);
}
.grip {
  width: 11px;
  height: 16px;
  flex: none;
  background: repeating-linear-gradient(#6b98d8 0 2px, transparent 2px 4px) 4px 0 / 2px 16px no-repeat,
    repeating-linear-gradient(#fff 0 2px, transparent 2px 4px) 5px 1px / 2px 15px no-repeat;
}
.grip.slim { width: 10px; }
.tool { width: 24px; height: 24px; flex: none; display: grid; place-items: center; }
.tool.on { border: 1px solid #8f7f57; border-radius: 2px; background: linear-gradient(#fcdcae, #fbbf6a 45%, #f9a440 50%, #fddb94); }
.sep { flex: none; width: 6px; height: 14px; background: linear-gradient(90deg, transparent 2px, #9ec4f3 2px 3px, #fff 3px 4px, transparent 4px); }
.more { flex: none; width: 11px; height: 26px; margin-left: 2px; border-radius: 0 3px 3px 0; background: linear-gradient(#cfe0f8, #a4c3ee 50%, #7ba4de); }
.more svg { width: 11px; height: 26px; }
.swatch {
  --tick: linear-gradient(#333, #333) 25px 11px / 3px 2px no-repeat;
  --rule: linear-gradient(#999, #999) 22px 0 / 1px 24px no-repeat;
  flex: none;
  width: 33px;
  height: 24px;
  border: 1px solid #a8a8a8;
  border-left-color: #6d96d6;
  background: var(--tick), var(--rule), #cbcdd0;
}
.swatch.white { background: var(--tick), linear-gradient(90deg, #fff 22px, #999 22px 23px, #cbcdd0 23px); }
.swatch.thick { background: linear-gradient(#000, #000) 0 11px / 21px 2px no-repeat, var(--tick), var(--rule), #cbcdd0; }
.swatch.thin { background: linear-gradient(#666, #666) 0 11px / 21px 1px no-repeat, var(--tick), var(--rule), #cbcdd0; }

/* Work area */
.work { flex: 1; min-height: 0; display: flex; }
.caption { flex: none; height: 16px; display: flex; align-items: center; gap: 2px; padding: 0 4px 0 0; background: linear-gradient(#8fafdb, #97b7ea); }
.caption span { flex: 1; }
.caption button { margin-left: 2px; }
.caption button svg, .docclose svg { width: 12px; height: 12px; }
.nav { width: 271px; flex: none; display: flex; flex-direction: column; padding-left: 1px; font-family: "Liberation Sans", Arial, sans-serif; }
.nav .caption, .nav .search { font-family: var(--ui); }
.navhead { flex: none; height: 33px; display: flex; align-items: center; gap: 8px; padding: 1px 0 0 11px; font-size: 16px; color: #5280b8; background: linear-gradient(#e4eefc, #c6dcfa 60%, #acd0fc); }
.navhead svg { width: 18px; height: 18px; }
.navtools { flex: none; height: 30px; display: flex; align-items: center; margin-right: 3px; padding-left: 3px; border-bottom: 1px solid var(--line); background: linear-gradient(#deebfd, #b7d4fb); }
.navtools .grip { width: 8px; }
.navtool { width: 25px; display: grid; place-items: center; }
.rule { width: 1px; height: 24px; margin: 0 4px; background: #9aa7ba; }
.navend { width: 11px; height: 28px; margin-left: auto; background: linear-gradient(#b0cbf1, #82a9e0); }
.finder { flex: none; height: 31px; display: flex; align-items: center; gap: 4px; padding-left: 4px; background: #d8e7fc; }
.search { width: 69px; height: 25px; border-radius: 5px; display: flex; align-items: center; justify-content: center; gap: 7px; padding-left: 2px; background: #cde1fd; }
.search svg { width: 11px; height: 12px; }
.treebox { flex: 1; min-height: 0; display: flex; margin-right: 3px; padding: 1px 1px 0; border: 1px solid #848b96; background: #fff; }
.tree { flex: 1; display: flex; flex-direction: column; }
.tree li { flex: 1; display: flex; align-items: center; gap: 3px; padding-left: 20px; }
.tree li.sub { padding-left: 0; }
.tree li.sub::before { content: ""; width: 7px; height: 9px; margin: 0 1px 0 9px; background: #a0a0a0; clip-path: polygon(0 0, 80% 50%, 0 100%, 0 85%, 55% 50%, 20% 22%, 20% 85%, 0 100%); }
.vscroll { width: 17px; flex: none; display: flex; flex-direction: column; gap: 1px; padding: 0 0 1px 1px; background: #f0f0f0; }
.arrow { width: 16px; height: 16px; flex: none; border: 1px solid #777; border-radius: 2px; background: linear-gradient(135deg, #fff, #cfcfcf); display: grid; place-items: center; }
.arrow::after { content: ""; width: 7px; height: 4px; background: #444; clip-path: polygon(50% 0, 100% 100%, 0 100%); }
.arrow.down::after { clip-path: polygon(0 0, 100% 0, 50% 100%); }
.arrow.left::after { width: 4px; height: 7px; clip-path: polygon(100% 0, 100% 100%, 0 50%); }
.arrow.right::after { width: 4px; height: 7px; clip-path: polygon(0 0, 100% 50%, 0 100%); }
.arrow.end { margin-top: auto; }
.arrow.right { margin-left: auto; }
.thumb { width: 16px; height: 262px; border: 1px solid #777; border-radius: 2px; background: linear-gradient(90deg, #fff, #c4c4c4); }
.thumb.small { height: 36px; margin-top: auto; }
.splitter { flex: none; height: 6px; display: grid; place-items: center; background: #c8dffd; }
.dots { display: block; width: 19px; height: 2px; background: repeating-linear-gradient(90deg, #7fa6dc 0 2px, transparent 2px 4px); }
.outlook { flex: none; border-bottom: 2px solid #5585c8; }
.outlook button { width: 100%; height: 30px; display: flex; align-items: center; gap: 7px; padding: 0 5px 2px; border-top: 1px solid #1d4f9a; color: #27508f; font-weight: 700; background: linear-gradient(#d6e6fb, #c3dafa 40%, #a7cbf5 45%, #b9dafc); }
.outlook .current { color: #000; background: linear-gradient(#fdd9ab, #fdbd6f 40%, #fba13c 45%, #fecb62); }
.navfoot { flex: none; height: 26px; background: #afd2ff; }
.vsplit { width: 6px; flex: none; border: solid #123a80; border-width: 0 1px; background: #8fb1e5; box-shadow: inset -1px 0 #fff; }
.centre { flex: 1; min-width: 0; display: flex; flex-direction: column; }
.doctabs { flex: none; height: 25px; display: flex; align-items: flex-end; justify-content: space-between; border-bottom: 1px solid #fff; box-shadow: inset 0 -1px #86b0ea; }
.doctab { height: 22px; display: flex; align-items: center; gap: 2px; margin-left: 2px; padding: 0 6px 0 2px; border: 1px solid #9cc0f0; border-bottom: 0; border-radius: 3px 3px 0 0; background: linear-gradient(#fff, #dce9fc); color: #24509a; }
.docclose { padding: 0 3px 7px; }
.viewport { flex: 1; min-height: 0; border: 2px solid #00f; background: #000; position: relative; }
.axis { position: absolute; left: 688px; top: 240px; width: 16px; height: 12px; }
.axislabel { position: absolute; left: 716px; top: 244px; color: #f00; font-weight: 700; font-size: 12px; }
.hsplit { flex: none; height: 5px; margin-top: 1px; border: solid #123a80; border-width: 1px 0; background: #8fb1e5; box-shadow: 0 -1px #fff; }
.feedback { flex: none; display: flex; flex-direction: column; }
.fbody { display: flex; height: 150px; padding: 1px 0 2px; border-top: 1px solid #fff; border-bottom: 1px solid #0a44a0; }
.ftools { width: 28px; flex: none; display: flex; flex-direction: column; align-items: center; gap: 8px; padding-top: 6px; margin-right: 2px; background: linear-gradient(90deg, #dfebfd, #b4d2fb); }
.ftools .dots { margin-bottom: 1px; }
.ftend { width: 28px; height: 11px; margin-top: auto; background: linear-gradient(90deg, #b8d2f7, #86ade4); }
.log { flex: 1; display: flex; flex-direction: column; border: 1px solid #848b96; background: #fff; padding: 1px 2px 0 1px; }
.logrow { flex: 1; display: flex; min-height: 0; }
.lines { flex: 1; display: flex; flex-direction: column; font: 11px/15px "Liberation Mono", "Courier New", monospace; color: #10106c; }
.lines li { flex: 1; display: flex; align-items: center; gap: 12px; padding-left: 7px; }
.lines svg { width: 10px; height: 10px; }
.picked { background: linear-gradient(#f2f2f2, #dedede); box-shadow: inset 0 0 0 1px #ccc; }
.hscroll { flex: none; height: 18px; display: flex; align-items: center; gap: 1px; margin: 2px 17px 0 0; background: #f0f0f0; }
.hthumb { width: 150px; height: 16px; border: 1px solid #777; border-radius: 2px; background: linear-gradient(#fff, #c8c8c8); }
.paneltabs { display: flex; height: 22px; padding: 0 1px 2px; }
.paneltabs button { display: flex; align-items: center; gap: 3px; padding: 0 6px 0 8px; color: #24509a; }
.paneltabs .active { padding: 0 6px 0 2px; background: linear-gradient(#eaf2fe, #fff); border-radius: 0 0 3px 3px; }
.side { width: 28px; flex: none; }
.sidebar { display: flex; flex-direction: column; align-items: center; padding: 3px 0 0 2px; border-radius: 3px; background: linear-gradient(90deg, #e0ecfd, #b7d4fb); }
.sidebar .dots { margin-bottom: 4px; }
.bar { width: 17px; height: 5px; background: linear-gradient(transparent 1px, #9ec4f3 1px 2px, #fff 2px 3px, transparent 3px); }
.sidemore { width: 100%; height: 12px; margin-top: 9px; display: flex; justify-content: flex-end; background: linear-gradient(90deg, #c6dbf8, #86ade4); }
.sidemore svg { width: 11px; height: 12px; }

/* Combo boxes */
.combo { position: relative; display: flex; align-items: center; width: 124px; height: 20px; border: 1px solid #828790; border-radius: 2px; background: #fff; }
.combo select { appearance: none; width: 100%; height: 100%; border: 0; padding: 0 24px 0 3px; background: none; line-height: 16px; opacity: 1; }
.combo::before { content: ""; position: absolute; right: 0; top: 0; bottom: 0; width: 21px; border-left: 1px solid #828790; background: linear-gradient(#f8f8f8, #cfcfcf); pointer-events: none; }
.combo::after { content: ""; position: absolute; right: 6px; top: 7px; width: 8px; height: 4px; background: #444; clip-path: polygon(0 0, 100% 0, 50% 100%); pointer-events: none; }
.combo.off { border-color: #b4b4b4; }
.combo.off::before { border-color: #b4b4b4; background: #ececec; }
.combo.off::after { background: #aaa; }
.pick { width: 188px; padding-left: 1px; }
.field { display: flex; align-items: center; gap: 5px; white-space: nowrap; }
.combo.flat { flex: 1; width: auto; height: 20px; border-color: #8cb6ee; border-radius: 0; }
.combo.flat::before { width: 14px; border: 0; background: linear-gradient(#d5e5fb, #a9c8f1); }
.combo.flat::after { right: 3px; top: 7px; height: 6px; background: #000; }
.combo.warn { padding-left: 4px; }
.combo.warn select { padding-left: 8px; }

/* Status rows */
.status { flex: none; display: flex; padding-bottom: 1px; }
.status .field { padding-top: 1px; }
.w-status { width: 351px; }
.w-stowed { width: 351px; }
.w-modules { width: 350px; }
.ready { color: #00f; }
.coords { flex: none; height: 22px; display: flex; align-items: center; padding: 2px 0 0 9px; color: #27508f; background: linear-gradient(#dceafd, #b9d6fd); }
.xyz { width: 223px; font-size: 12px; }
.coords .field { padding-left: 10px; }
.coords select { color: #000; }
.c1 { width: 187px; }
.c2 { width: 156px; }
.c3 { width: 161px; }
.sel { padding-left: 10px; }

/* Dialog window */
.dialog { position: absolute; left: 634px; top: 124px; width: 335px; border: 3px solid #6f9cdb; border-bottom-width: 4px; background: linear-gradient(90deg, #dceaff, #bcd9ff 20px, #c6dfff); }
.dtitle { height: 38px; display: flex; align-items: center; gap: 2px; padding: 0 6px 0 1px; background: linear-gradient(90deg, #bcd9ff, #dfeafd); }
.logo { width: 36px; height: 36px; }
.dialog h1, .dialog h2 { font-family: "Open Sans", "Noto Sans", sans-serif; }
.dtitle h1 { flex: 1; padding: 2px 0 0 4px; font-size: 12px; font-weight: 600; color: #00008b; }
.wbtn { width: 22px; height: 22px; margin-bottom: 4px; border: 1px solid #56687e; border-radius: 4px; display: grid; place-items: center; font-size: 12px; color: #fff; }
.wbtn svg { width: 14px; }
.info { background: linear-gradient(#4aa3fb, #1683fb); color: #c8ff5a; }
.dock { background: linear-gradient(#9cd5fb, #6ec0fa); }
.mini { background: linear-gradient(#c9d6ea, #a9bedb); }
.shut { background: linear-gradient(#f49a9a, #f07272); }
.dbody { padding-left: 6px; display: flex; flex-direction: column; gap: 3px; }
.dbody h2 { height: 35px; padding: 12px 0 0 5px; font-size: 13px; line-height: 18px; font-weight: 700; }
fieldset { margin: 0; padding: 0; min-width: 0; border: 1px solid #828790; border-radius: 3px; background: #fff; }
legend { float: left; width: 100%; height: 19px; padding: 0 4px; border-bottom: 1px solid #333; border-radius: 3px 3px 0 0; background: linear-gradient(#fff, #ececec); line-height: 19px; }
.bare { height: 3px; border-bottom: 1px solid #333; background: #f0f0f0; }
.rows { clear: both; display: flex; flex-direction: column; gap: 7px; padding: 9px 6px 0 0; }
.schema { padding-bottom: 6px; }
.input { padding-bottom: 14px; }
.output { padding-bottom: 37px; }
.steps { padding-bottom: 2px; }
.optional { padding-bottom: 16px; }
.row { display: flex; gap: 7px; }
.row label { width: 152px; padding-top: 5px; height: 20px; text-align: right; white-space: nowrap; }
.wide { gap: 2px; }
.wide label { width: 157px; padding-top: 9px; }
.row input { width: 125px; height: 22px; padding: 0 4px 2px; border: 1px solid #828790; border-radius: 2px; background: #fff; }
.dots3 { width: 25px; height: 22px; border: 1px solid #777; border-radius: 2px; background: linear-gradient(#fff, #cfcfcf); }
.check { display: flex; align-items: center; gap: 4px; height: 13px; padding-left: 157px; white-space: nowrap; }
.check input { appearance: none; flex: none; width: 13px; height: 13px; margin: 0; border: 1px solid #777; background: linear-gradient(135deg, #d8d8d8, #fff); }
.dfoot { height: 40px; display: flex; justify-content: flex-end; align-items: center; gap: 8px; padding-right: 20px; background: linear-gradient(#fbfbfb, #e7e7e7 6px); }
.act { width: 73px; height: 20px; border: 1px solid #1c2b33; border-radius: 5px; background: linear-gradient(#edf4fb 50%, #ced8e2 50%); }
.primary { border: 2px solid #6bb8fb; box-shadow: inset 0 0 2px 1px #8fdcff; }
```
